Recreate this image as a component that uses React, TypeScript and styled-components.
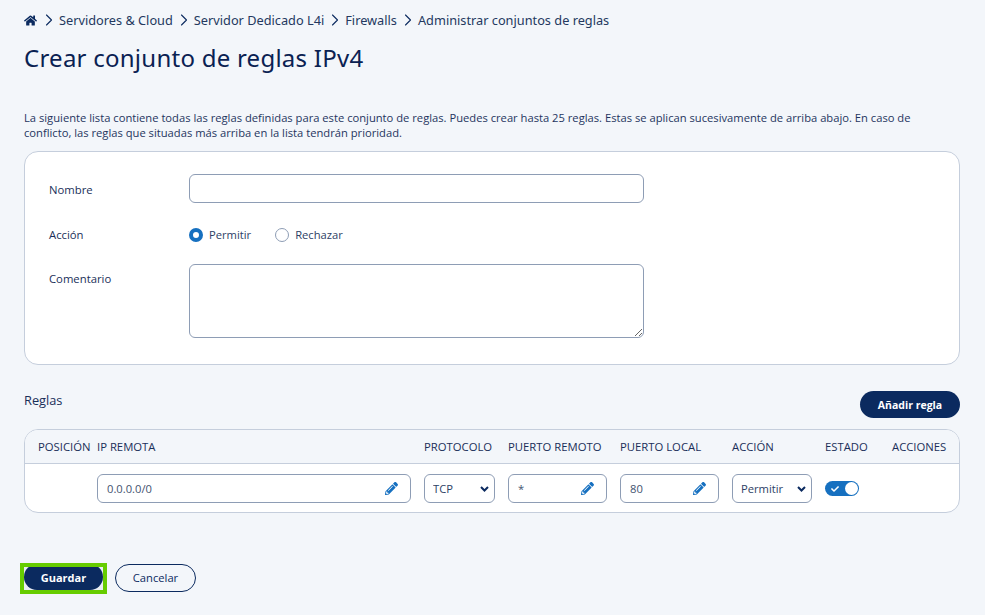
import React from "react";
import styled, { createGlobalStyle } from "styled-components";
import { FaHome, FaPencilAlt, FaCheck } from "react-icons/fa";
import { ChevronRight } from "lucide-react";

const Global = createGlobalStyle`
  html, body { margin: 0; padding: 0; background: #f3f6fa; }
  body { font-family: "Open Sans", "Liberation Sans", sans-serif; color: #0b2a5f; }
  * { box-sizing: border-box; }
`;

const Page = styled.div`
  width: 985px;
  height: 615px;
  padding: 11px 25px 0 24px;
  overflow: hidden;
`;

const Breadcrumb = styled.nav`
  display: flex;
  align-items: center;
  height: 18px;
  font-size: 12.75px;
  color: #24395f;
  font-family: "Noto Sans", sans-serif;
`;

const HomeLink = styled.span`
  display: flex;
  color: #0b2a5f;
  margin-right: 1px;
`;

const Sep = styled.span`
  display: flex;
  margin-left: 1px;
  color: #0b2a5f;
`;

const Title = styled.h1`
  margin: 13px 0 0;
  font-family: "Noto Sans", sans-serif;
  font-size: 24px;
  line-height: 32px;
  font-weight: 400;
  color: #0a2152;
  letter-spacing: 0.25px;
`;

const Intro = styled.p`
  margin: 36px 0 0;
  width: 900px;
  font-size: 11.2px;
  line-height: 15px;
  color: #1f3560;
`;

const FormCard = styled.section`
  margin-top: 11px;
  height: 214px;
  background: #fff;
  border: 1px solid #c5cedc;
  border-radius: 14px;
  padding: 22px 24px 0;
`;

const FieldRow = styled.div<{ $h: number; $mb: number }>`
  display: grid;
  grid-template-columns: 140px 455px;
  height: ${(p) => p.$h}px;
  margin-bottom: ${(p) => p.$mb}px;
`;

const FieldLabel = styled.label<{ $pt: number }>`
  font-size: 11.3px;
  font-weight: 500;
  line-height: 15px;
  padding-top: ${(p) => p.$pt}px;
  color: #1a2f59;
`;

const TextInput = styled.input`
  width: 455px;
  height: 29px;
  border: 1px solid #8e9db5;
  border-radius: 6px;
  background: #fff;
  outline: none;
`;

const TextArea = styled.textarea`
  display: block;
  width: 455px;
  height: 74px;
  border: 1px solid #8e9db5;
  border-radius: 6px;
  background: #fff;
  outline: none;
`;

const Radios = styled.div`
  display: flex;
  align-items: center;
  gap: 24px;
  height: 15px;
`;

const RadioItem = styled.span`
  display: flex;
  align-items: center;
  gap: 6px;
  font-size: 11.2px;
  color: #2d4165;
`;

const RadioDot = styled.span<{ $on?: boolean }>`
  width: 14px;
  height: 14px;
  border-radius: 50%;
  background: #fff;
  border: ${(p) => (p.$on ? "4.5px solid #1670c0" : "1px solid #8e9db5")};
`;

const RulesHead = styled.div`
  display: flex;
  justify-content: space-between;
  margin-top: 26px;
  height: 27px;
`;

const RulesLabel = styled.span`
  font-size: 12.8px;
  font-weight: 500;
  line-height: 18px;
  color: #1a2f59;
`;

const PrimaryPill = styled.button`
  border: 0;
  background: #0b2a5f;
  color: #fff;
  font-family: inherit;
  font-weight: 700;
  font-size: 10.5px;
  border-radius: 14px;
  padding: 0;
`;

const AddButton = styled(PrimaryPill)`
  width: 100px;
  height: 27px;
`;

const Table = styled.div`
  margin-top: 11px;
  height: 84px;
  background: #fff;
  border: 1px solid #c5cedc;
  border-radius: 14px;
`;

const Cols = styled.div`
  display: grid;
  grid-template-columns: 46px 314px 71px 99px 99px 80px 54px 54px;
  column-gap: 13px;
  padding: 0 13px;
`;

const HeadRow = styled(Cols)`
  height: 34px;
  align-items: center;
  border-bottom: 1px solid #c5cedc;
  background: #f3f6fa;
  border-radius: 13px 13px 0 0;
  font-size: 11.3px;
  font-weight: 500;
  color: #1a2f59;
`;

const BodyRow = styled(Cols)`
  padding-top: 10px;
  align-items: center;
`;

const HeadCell = styled.span`
  white-space: nowrap;
`;

const Editable = styled.div`
  height: 29px;
  border: 1px solid #8e9db5;
  border-radius: 6px;
  display: flex;
  align-items: center;
  justify-content: space-between;
  padding: 0 12px 0 9px;
  font-size: 11.2px;
  color: #44536f;
  background: #fff;
`;

const PenIcon = styled(FaPencilAlt)`
  color: #1670c0;
  width: 13px;
  height: 13px;
`;

const Select = styled.select`
  appearance: none;
  height: 29px;
  width: 100%;
  border: 1px solid #8e9db5;
  border-radius: 6px;
  background-color: #fff;
  background-image: url("data:image/svg+xml,%3Csvg xmlns='http://www.w3.org/2000/svg' viewBox='0 0 9 6'%3E%3Cpath d='M1 1l3.5 3.5L8 1' fill='none' stroke='%230b2a5f' stroke-width='2'/%3E%3C/svg%3E");
  background-repeat: no-repeat;
  background-size: 9px 6px;
  background-position: right 5px center;
  font-family: inherit;
  font-size: 11.2px;
  color: #2d4165;
  padding: 0 0 0 8px;
  outline: none;
`;

const Toggle = styled.span`
  display: flex;
  align-items: center;
  width: 34px;
  height: 15px;
  padding: 1px 1px 1px 6px;
  justify-content: space-between;
  background: #1670c0;
  border-radius: 8px;
  color: #fff;
`;

const ToggleKnob = styled.span`
  width: 13px;
  height: 13px;
  border-radius: 50%;
  background: #fff;
`;

const Footer = styled.div`
  display: flex;
  align-items: flex-start;
  gap: 8px;
  margin-top: 50px;
  margin-left: -4px;
`;

const FocusFrame = styled.div`
  width: 87px;
  height: 31px;
  border: 4px solid #66cc00;
  background: #e9edf3;
  overflow: hidden;
`;

const SaveButton = styled(PrimaryPill)`
  display: block;
  width: 79px;
  height: 26px;
  margin-top: -3px;
  font-size: 11px;
  border-radius: 13px;
`;

const CancelButton = styled.button`
  width: 81px;
  height: 28px;
  margin-top: 1px;
  border: 1px solid #0b2a5f;
  border-radius: 14px;
  background: transparent;
  color: #0b2a5f;
  font-family: inherit;
  font-weight: 500;
  font-size: 11.2px;
  padding: 0 0 2px;
`;

const crumbs = ["Servidores & Cloud", "Servidor Dedicado L4i", "Firewalls", "Administrar conjuntos de reglas"];
const heads = ["POSICIÓN", "IP REMOTA", "PROTOCOLO", "PUERTO REMOTO", "PUERTO LOCAL", "ACCIÓN", "ESTADO", "ACCIONES"];

export default function App() {
  return (
    <Page>
      <Global />
      <Breadcrumb>
        <HomeLink><FaHome size={13} /></HomeLink>
        {crumbs.map((c) => (
          <React.Fragment key={c}>
            <Sep><ChevronRight size={20} strokeWidth={1.3} /></Sep>
            <span>{c}</span>
          </React.Fragment>
        ))}
      </Breadcrumb>
      <Title>Crear conjunto de reglas IPv4</Title>
      <Intro>
        La siguiente lista contiene todas las reglas definidas para este conjunto de reglas. Puedes crear hasta 25 reglas. Estas se aplican sucesivamente de arriba abajo. En caso de conflicto, las reglas que situadas más arriba en la lista tendrán prioridad.
      </Intro>
      <FormCard>
        <FieldRow $h={29} $mb={24}>
          <FieldLabel $pt={8}>Nombre</FieldLabel>
          <TextInput />
        </FieldRow>
        <FieldRow $h={15} $mb={22}>
          <FieldLabel $pt={0}>Acción</FieldLabel>
          <Radios>
            <RadioItem><RadioDot $on />Permitir</RadioItem>
            <RadioItem><RadioDot />Rechazar</RadioItem>
          </Radios>
        </FieldRow>
        <FieldRow $h={74} $mb={0}>
          <FieldLabel $pt={7}>Comentario</FieldLabel>
          <TextArea />
        </FieldRow>
      </FormCard>
      <RulesHead>
        <RulesLabel>Reglas</RulesLabel>
        <AddButton>Añadir regla</AddButton>
      </RulesHead>
      <Table>
        <HeadRow>
          {heads.map((h) => <HeadCell key={h}>{h}</HeadCell>)}
        </HeadRow>
        <BodyRow>
          <span />
          <Editable>0.0.0.0/0<PenIcon /></Editable>
          <Select defaultValue="TCP"><option>TCP</option><option>UDP</option></Select>
          <Editable>*<PenIcon /></Editable>
          <Editable>80<PenIcon /></Editable>
          <Select defaultValue="Permitir"><option>Permitir</option><option>Rechazar</option></Select>
          <Toggle><FaCheck size={8} /><ToggleKnob /></Toggle>
          <span />
        </BodyRow>
      </Table>
      <Footer>
        <FocusFrame><SaveButton>Guardar</SaveButton></FocusFrame>
        <CancelButton>Cancelar</CancelButton>
      </Footer>
    </Page>
  );
}
